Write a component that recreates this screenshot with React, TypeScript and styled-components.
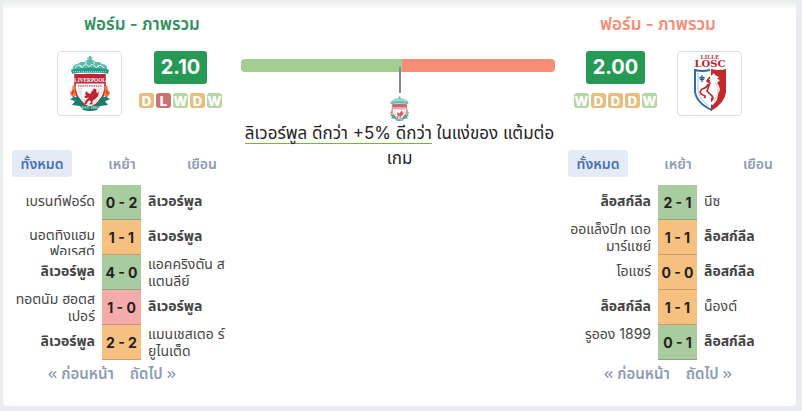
import React, { useState } from "react";
import styled, { createGlobalStyle, css } from "styled-components";
import { ChevronsLeft, ChevronsRight } from "lucide-react";

type Result = "W" | "D" | "L";
type Fit = "single" | "double" | "clipped";
type Match = {
  home: React.ReactNode;
  away: React.ReactNode;
  score: string;
  result: Result;
  own: "home" | "away";
  homeFit?: Fit;
  awayFit?: Fit;
};

const GlobalStyle = createGlobalStyle`
  * { box-sizing: border-box; }
  body {
    margin: 0;
    background: #e9edf2;
    color: #222;
    font-family: Inter, "Noto Sans Thai", "Noto Sans", sans-serif;
  }
  button { font: inherit; border: 0; background: none; padding: 0; cursor: pointer; }
`;

const Card = styled.main`
  display: grid;
  grid-template-columns: 220px minmax(0, 1fr) 220px;
  margin: 0 6px 5px 3px;
  padding: 0 8px 20px 9px;
  background: linear-gradient(#eaedec, #fff 10px);
  border-radius: 0 0 4px 4px;
`;

const Side = styled.section``;

const Header = styled.div<{ $away?: boolean }>`
  padding: ${(p) => (p.$away ? "0 40px 0 0" : "0 0 0 40px")};
`;

const Title = styled.h2<{ $away?: boolean }>`
  margin: 0;
  padding-top: 12px;
  height: 51px;
  font-size: 17px;
  line-height: 24px;
  font-weight: 600;
  text-align: center;
  color: ${(p) => (p.$away ? "#f68b76" : "#2f8f5b")};
`;

const Summary = styled.div<{ $away?: boolean }>`
  display: flex;
  flex-direction: ${(p) => (p.$away ? "row-reverse" : "row")};
  justify-content: ${(p) => (p.$away ? "center" : "flex-start")};
  gap: ${(p) => (p.$away ? 20 : 17)}px;
  padding-left: ${(p) => (p.$away ? 0 : 5)}px;
`;

const CrestBox = styled.div`
  display: grid;
  place-items: center;
  width: 65px;
  height: 65px;
  border: 1px solid #dcdfe6;
  border-radius: 4px;
`;

const Rating = styled.div`
  display: flex;
  flex-direction: column;
  align-items: center;
  gap: 9px;
`;

const Points = styled.strong`
  padding: 0 7px;
  border-radius: 3px;
  background: #269a54;
  color: #fff;
  font-size: 20px;
  line-height: 33px;
  font-weight: 700;
`;

const Streak = styled.div`
  display: flex;
  gap: 2px;
`;

const chipColors: Record<Result, string> = { W: "#b5d6a5", D: "#e6be7d", L: "#c87373" };

const Chip = styled.span<{ $result: Result }>`
  display: flex;
  justify-content: center;
  width: 15px;
  height: 15px;
  border-radius: 3px;
  background: ${(p) => chipColors[p.$result]};
  color: #fff;
  font-size: 13px;
  line-height: 16px;
  font-weight: 800;
`;

const Tabs = styled.div`
  display: flex;
  justify-content: space-between;
  margin: 34px 0 8px;
`;

const Tab = styled.button<{ $active: boolean }>`
  && {
    width: 60px;
    height: 27px;
    border-radius: 3px;
    background: ${(p) => (p.$active ? "#e4ebf6" : "transparent")};
    color: ${(p) => (p.$active ? "#4a72b8" : "#8d9cb5")};
    font-size: 14px;
    line-height: 27px;
    font-weight: 600;
  }
`;

const Results = styled.table`
  width: 100%;
  table-layout: fixed;
  border-collapse: collapse;
  color: #444;
  font-size: 14px;
`;

const HomeColumn = styled.col`
  width: 90px;
`;

const ScoreColumn = styled.col`
  width: 39px;
`;

const TeamCell = styled.td<{ $side: "home" | "away"; $own: boolean }>`
  padding: ${(p) => (p.$side === "home" ? "0 7px 0 0" : "0 0 0 7px")};
  text-align: ${(p) => (p.$side === "home" ? "right" : "left")};
  font-weight: ${(p) => (p.$own ? 700 : 400)};
`;

const fits: Record<Fit, ReturnType<typeof css>> = {
  single: css`padding-top: 6px; line-height: 19px;`,
  double: css`line-height: 17px;`,
  clipped: css`padding-top: 7px; line-height: 16px;`,
};

const TeamName = styled.div<{ $fit: Fit }>`
  height: 35px;
  overflow: hidden;
  white-space: nowrap;
  ${(p) => fits[p.$fit]}
`;

const scoreColors: Record<Result, string> = { W: "#a8cb9f", D: "#f5c080", L: "#f6abab" };

const Score = styled.td<{ $result: Result }>`
  padding: 0;
  background: ${(p) => scoreColors[p.$result]};
  box-shadow: inset 0 -1px rgba(0, 0, 0, 0.18);
  color: #222;
  font-size: 14px;
  font-weight: 700;
  line-height: 34px;
  text-align: center;
  white-space: nowrap;
`;

const Pager = styled.nav`
  display: flex;
  justify-content: center;
  gap: 16px;
  margin-top: 2px;
  padding-right: 20px;
`;

const PageButton = styled.button`
  && {
    display: flex;
    align-items: center;
    gap: 2px;
    color: #8d9cb5;
    font-size: 15px;
    line-height: 24px;
    font-weight: 600;
  }
`;

const Comparison = styled.section`
  margin: 59px 13px 0 9px;
`;

const Bar = styled.div`
  display: grid;
  grid-template-columns: 161fr 153fr;
  height: 13px;
  border-radius: 4px;
  overflow: hidden;
`;

const BarPart = styled.div<{ $away?: boolean }>`
  background: ${(p) => (p.$away ? "#f68d77" : "#a3cd91")};
`;

const Marker = styled.div`
  position: relative;
  display: flex;
  justify-content: center;
  height: 49px;
  padding-top: 24px;
  padding-left: 3px;
  &::before {
    content: "";
    position: absolute;
    top: -5px;
    left: calc(50% + 1px);
    width: 2px;
    height: 26px;
    background: #888;
  }
`;

const Verdict = styled.p`
  margin: 0;
  padding-left: 3px;
  font-size: 17px;
  line-height: 25px;
  text-align: center;
  color: #222;
`;

const Lead = styled.span`
  border-bottom: 1px solid #74b43e;
`;

function LiverpoolCrest({ width, height, faded }: { width: number; height: number; faded?: boolean }) {
  return (
    <svg width={width} height={height} viewBox="0 0 40 56" preserveAspectRatio="none" opacity={faded ? 0.72 : 1} aria-label="Liverpool">
      <path d="M2 17 3 11 5 9 8 8 11 6 15 6 17 4 19 3 19 0 21 0 21 3 23 4 25 6 29 6 32 8 35 9 37 11 38 17Z" fill="#5bb9a8" />
      <path d="M5 12q4-5 7 0q3-6 7-1q4-5 7 1q4-5 8 0M9 9l3 2M31 9l-4 2M15 8l2-2M25 8l-2-2" fill="none" stroke="#e0f5f1" strokeWidth="1" />
      <path d="M17 2h6" stroke="#5bb9a8" />
      <path d="M1 14q19-4 38 0l-1 4q-18-3-36 0Z" fill="#249c87" />
      <path d="M3 16h34" stroke="#b4e2d9" strokeWidth="1" strokeDasharray="1 1" />
      <path d="M5 19h30v14q-1 13-15 20Q6 46 5 33Z" fill="#fff" stroke="#c5283a" strokeWidth="1.6" />
      <path d="M8 32v4q1 10 12 15 11-5 12-15v-4Z" fill="#e9e9e9" />
      <path d="M12 32v9l8 8 8-8v-9Z" fill="#fff" />
      <path d="M5 19q15-2 30 0v9H5Z" fill="#bc2638" />
      <text x="20" y="26.5" textAnchor="middle" fontFamily="Liberation Serif" fontWeight="700" fontSize="5.3" fill="#fff">LIVERPOOL</text>
      <path d="M8 30.5h24" stroke="#d76872" strokeWidth="1.5" strokeDasharray="1.5 .7" />
      <path d="M24 33l3 1-1 1 1 3 2-2-1 5-3 3-2 1-1 3 2 1h-5l2-2-1-2-2 1-2 3h-2l2-4 3-3-3 1-2-1 2-2 4-1 2-3Z" fill="#c2212f" />
      <path d="M20 39l-4-3-1 3 4 2Z" fill="#c2212f" />
      <path d="M3 29q1 3 3 2l-1 6q2 2 0 4-4 1-5-3 0-2 2-3Z" fill="#f27a42" />
      <path d="M37 29q-1 3-3 2l1 6q-2 2 0 4 4 1 5-3 0-2-2-3Z" fill="#f27a42" />
      <path d="M2 39q2-2 1-4M38 39q-2-2-1-4" fill="none" stroke="#df3131" strokeWidth="1.5" />
      <path d="M0 44q6-4 10-1l3 6q7 4 14 0l3-6q5-3 10 1l-5 2 3 4-8 1-3 4q-7 2-14 0l-3-4-8-1 3-4Z" fill="#167d6c" />
      <path d="M3 41l3 4M37 41l-3 4" stroke="#188672" strokeWidth="2" />
      <text x="20" y="54" textAnchor="middle" fontFamily="Liberation Serif" fontWeight="700" fontSize="4" fill="#d1eee7">EST·1892</text>
    </svg>
  );
}

function LilleCrest() {
  return (
    <svg width="34" height="57" viewBox="0 0 34 57" overflow="visible" aria-label="Lille OSC">
      <text x="17" y="4" textAnchor="middle" fontFamily="Liberation Serif" fontWeight="700" fontSize="6" fill="#c32830">LILLE</text>
      <text x="17" y="12" textAnchor="middle" fontFamily="DejaVu Serif" fontWeight="700" fontSize="10" fill="#bd242c">LOSC</text>
      <path d="M1 15q8 1 16-1 8 2 16 1v21q0 12-16 20Q1 48 1 36Z" fill="#fff" />
      <path d="M18 14q8 2 15 0v23q-1 11-15 19Z" fill="#c3282d" />
      <path d="M17 15q-8 2-15 0v21q1 12 17 19" fill="none" stroke="#316b9f" strokeWidth="2" />
      <path d="M5 18v18q1 8 11 15" fill="none" stroke="#8bafca" strokeWidth=".7" />
      <path d="M9 20v7M6 23h6M7 22l4 3M11 22l-4 3" stroke="#245c91" strokeWidth="1.2" />
      <path d="M17 22l4-4 1 2 4 2-2 2 3 1-3 3q5 6 1 11l-1 6-4 5-3-1 3-5-5-4-4 3-3-1 6-5 4-7-3-2Z" fill="#fff" />
      <path d="M15 29q-1 4-6 5-4 4 1 6 4 1 1 3M17 22l-3 4 3 2-3 8 4 4q4 3 0 6M17 26l-3-1" fill="none" stroke="#bd272e" strokeWidth="1.6" />
      <path d="M22 28q5 6 2 11M22 40q3 2-1 5" fill="none" stroke="#df8c90" strokeWidth=".6" />
    </svg>
  );
}

const homeMatches: Match[] = [
  { home: "เบรนท์ฟอร์ด", away: "ลิเวอร์พูล", score: "0 - 2", result: "W", own: "away" },
  { home: <>นอตทิงแฮม<br />ฟอเรสต์</>, away: "ลิเวอร์พูล", score: "1 - 1", result: "D", own: "away", homeFit: "clipped" },
  { home: "ลิเวอร์พูล", away: <>แอคคริงตัน ส<br />แตนลีย์</>, score: "4 - 0", result: "W", own: "home", awayFit: "double" },
  { home: <>ทอตนัม ฮอตส<br />เปอร์</>, away: "ลิเวอร์พูล", score: "1 - 0", result: "L", own: "away", homeFit: "double" },
  { home: "ลิเวอร์พูล", away: <>แมนเชสเตอ ร์<br />ยูไนเต็ด</>, score: "2 - 2", result: "D", own: "home", awayFit: "double" },
];

const awayMatches: Match[] = [
  { home: "ล็อสก์ลีล", away: "นีซ", score: "2 - 1", result: "W", own: "home" },
  { home: <>ออแล็งปิก เดอ<br />มาร์แซย์</>, away: "ล็อสก์ลีล", score: "1 - 1", result: "D", own: "away", homeFit: "double" },
  { home: "โอแซร์", away: "ล็อสก์ลีล", score: "0 - 0", result: "D", own: "away" },
  { home: "ล็อสก์ลีล", away: "น็องต์", score: "1 - 1", result: "D", own: "home" },
  { home: "รูออง 1899", away: "ล็อสก์ลีล", score: "0 - 1", result: "W", own: "away", homeFit: "double" },
];

const tabNames = ["ทั้งหมด", "เหย้า", "เยือน"];

type TeamProps = { away?: boolean; crest: React.ReactNode; points: string; streak: Result[]; matches: Match[] };

function TeamForm({ away, crest, points, streak, matches }: TeamProps) {
  const [tab, setTab] = useState(0);
  return (
    <Side>
      <Header $away={away}>
        <Title $away={away}>ฟอร์ม - ภาพรวม</Title>
        <Summary $away={away}>
          <CrestBox>{crest}</CrestBox>
          <Rating>
            <Points>{points}</Points>
            <Streak>{streak.map((r, i) => <Chip key={i} $result={r}>{r}</Chip>)}</Streak>
          </Rating>
        </Summary>
      </Header>
      <Tabs>
        {tabNames.map((name, i) => (
          <Tab key={name} $active={i === tab} onClick={() => setTab(i)}>{name}</Tab>
        ))}
      </Tabs>
      <Results>
        <colgroup><HomeColumn /><ScoreColumn /><col /></colgroup>
        <tbody>
          {matches.map((m, i) => (
            <tr key={i}>
              <TeamCell $side="home" $own={m.own === "home"}><TeamName $fit={m.homeFit ?? "single"}>{m.home}</TeamName></TeamCell>
              <Score $result={m.result}>{m.score}</Score>
              <TeamCell $side="away" $own={m.own === "away"}><TeamName $fit={m.awayFit ?? "single"}>{m.away}</TeamName></TeamCell>
            </tr>
          ))}
        </tbody>
      </Results>
      <Pager>
        <PageButton><ChevronsLeft size={13} strokeWidth={3} />ก่อนหน้า</PageButton>
        <PageButton>ถัดไป<ChevronsRight size={13} strokeWidth={3} /></PageButton>
      </Pager>
    </Side>
  );
}

export default function App() {
  return (
    <>
      <GlobalStyle />
      <Card>
        <TeamForm crest={<LiverpoolCrest width={40} height={55} />} points="2.10" streak={["D", "L", "W", "D", "W"]} matches={homeMatches} />
        <Comparison>
          <Bar><BarPart /><BarPart $away /></Bar>
          <Marker><LiverpoolCrest width={19} height={25} faded /></Marker>
          <Verdict><Lead>ลิเวอร์พูล ดีกว่า +5% ดีกว่า</Lead> ในแง่ของ แต้มต่อ<br />เกม</Verdict>
        </Comparison>
        <TeamForm away crest={<LilleCrest />} points="2.00" streak={["W", "D", "D", "D", "W"]} matches={awayMatches} />
      </Card>
    </>
  );
}
